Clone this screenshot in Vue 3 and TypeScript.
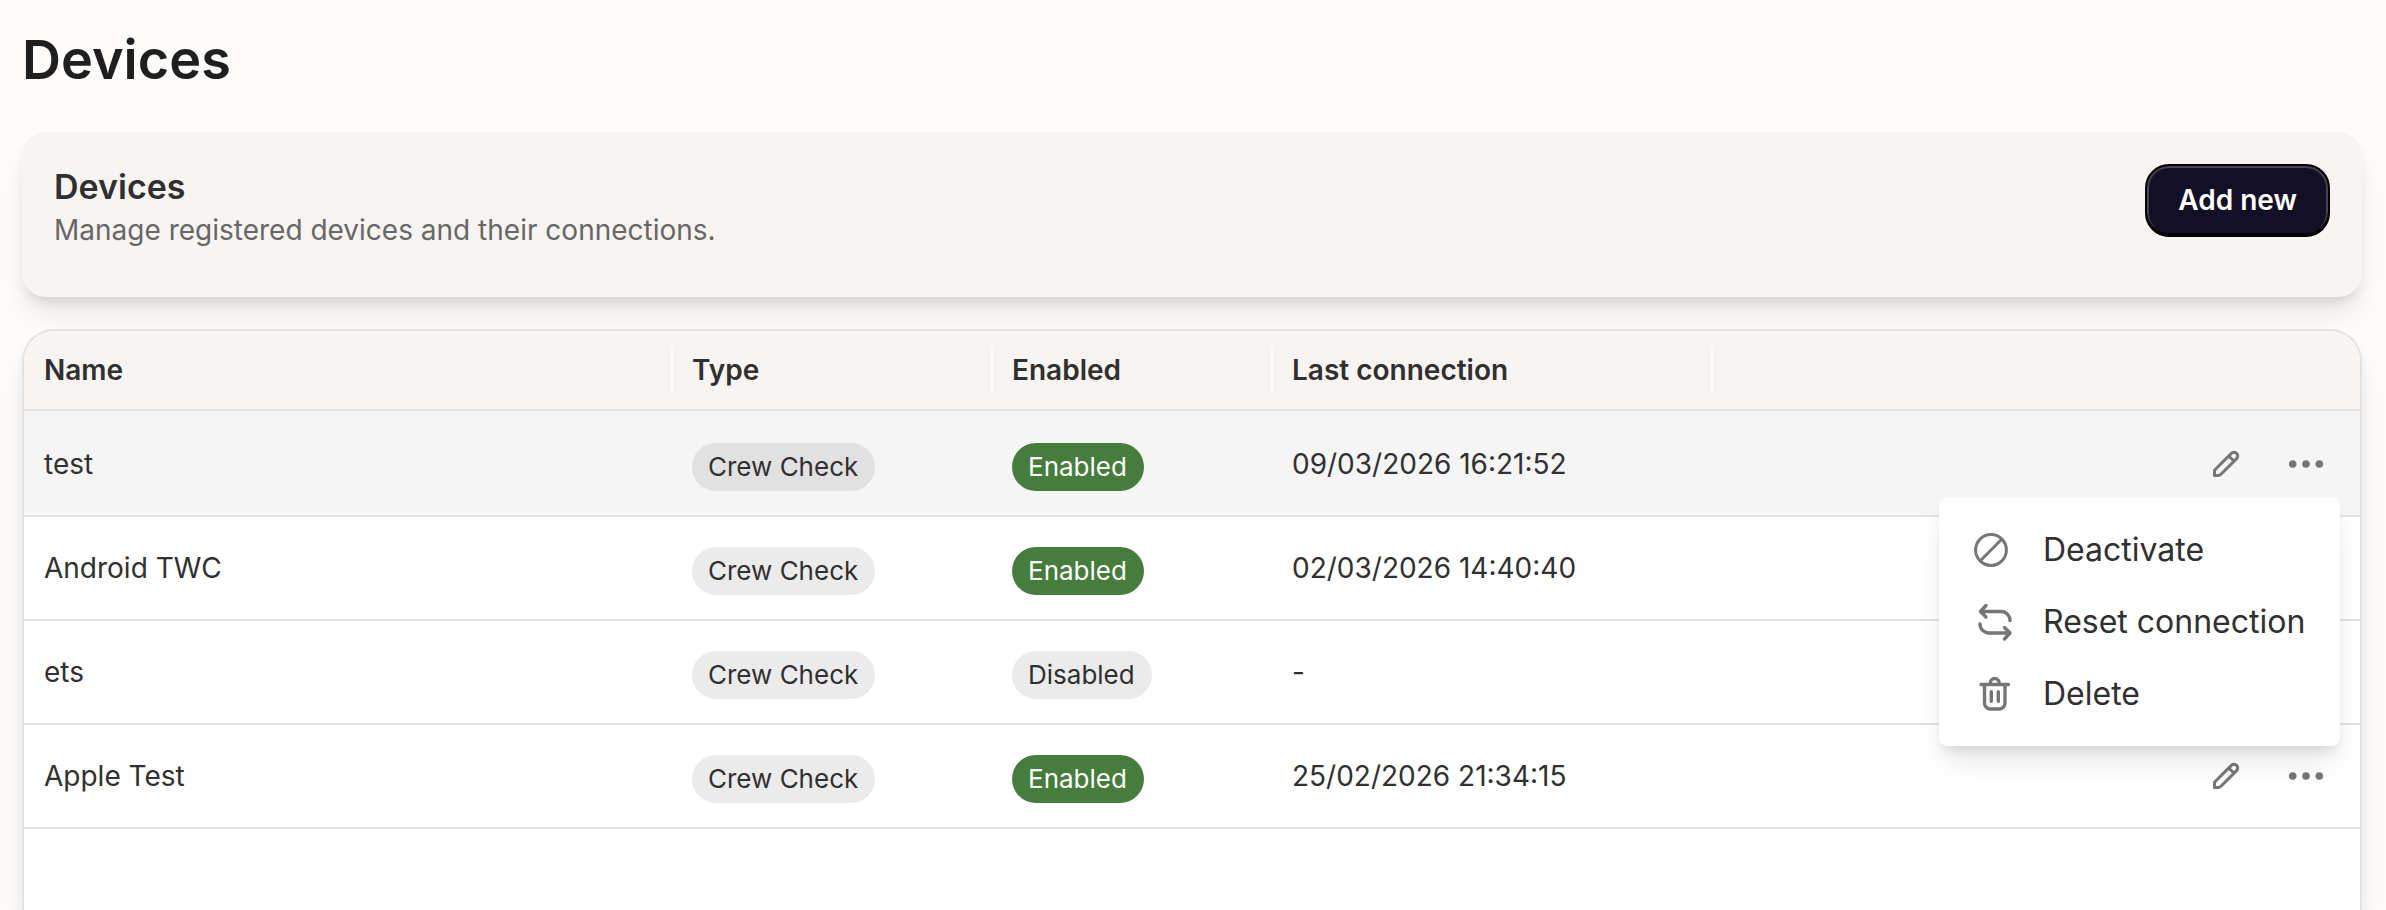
<script setup lang="ts">
import { ref } from 'vue'

interface Device {
  id: number
  name: string
  type: string
  enabled: boolean
  lastConnection: string
}

const devices: Device[] = [
  { id: 1, name: 'test', type: 'Crew Check', enabled: true, lastConnection: '09/03/2026 16:21:52' },
  { id: 2, name: 'Android TWC', type: 'Crew Check', enabled: true, lastConnection: '02/03/2026 14:40:40' },
  { id: 3, name: 'ets', type: 'Crew Check', enabled: false, lastConnection: '-' },
  { id: 4, name: 'Apple Test', type: 'Crew Check', enabled: true, lastConnection: '25/02/2026 21:34:15' },
]

const openMenu = ref<number | null>(1)

function toggleMenu(id: number): void {
  openMenu.value = openMenu.value === id ? null : id
}
</script>

<template>
  <main class="page">
    <h1 class="page-title">Devices</h1>

    <section class="intro">
      <div>
        <h2 class="intro-title">Devices</h2>
        <p class="intro-text">Manage registered devices and their connections.</p>
      </div>
      <button type="button" class="add">Add new</button>
    </section>

    <section class="panel">
      <table class="table">
        <colgroup>
          <col />
          <col class="col-type" />
          <col class="col-enabled" />
          <col class="col-last" />
          <col />
        </colgroup>
        <thead>
          <tr>
            <th scope="col">Name</th>
            <th scope="col">Type</th>
            <th scope="col">Enabled</th>
            <th scope="col">Last connection</th>
            <th scope="col" aria-label="Actions"></th>
          </tr>
        </thead>
        <tbody>
          <tr v-for="device in devices" :key="device.id" :class="{ active: openMenu === device.id }">
            <td>{{ device.name }}</td>
            <td><span class="chip">{{ device.type }}</span></td>
            <td>
              <span class="chip" :class="{ on: device.enabled }">{{ device.enabled ? 'Enabled' : 'Disabled' }}</span>
            </td>
            <td>{{ device.lastConnection }}</td>
            <td>
              <div class="actions">
                <button type="button" class="icon-button" :aria-label="`Edit ${device.name}`">
                  <svg width="28" height="28" viewBox="0 0 28 28" fill="none" stroke="currentColor" stroke-width="3" stroke-linejoin="round">
                    <path d="M2.5 25.5v-5.2L19.4 3.4a3.6 3.6 0 0 1 5.2 5.2L9.2 24c-1 1-2 1.500-3.200 1.500z" />
                    <path d="M16.800 6l5.200 5.200" />
                  </svg>
                </button>
                <button
                  type="button"
                  class="icon-button"
                  aria-haspopup="menu"
                  :aria-expanded="openMenu === device.id"
                  :aria-label="`More actions for ${device.name}`"
                  @click="toggleMenu(device.id)"
                >
                  <svg width="36" height="12" viewBox="0 0 36 12" fill="currentColor">
                    <circle cx="4.700" cy="6" r="3.800" />
                    <circle cx="18" cy="6" r="3.800" />
                    <circle cx="31.300" cy="6" r="3.800" />
                  </svg>
                </button>
                <div v-if="openMenu === device.id" class="menu" role="menu">
                  <button type="button" class="menu-item" role="menuitem">
                    <svg width="40" height="40" viewBox="0 0 40 40" fill="none" stroke="currentColor" stroke-width="3">
                      <circle cx="17" cy="20" r="15.400" />
                      <path d="M6.300 30.700L27.700 9.300" />
                    </svg>
                    Deactivate
                  </button>
                  <button type="button" class="menu-item" role="menuitem">
                    <svg width="40" height="40" viewBox="0 0 40 40" fill="none" stroke="currentColor" stroke-width="3.400" stroke-linecap="round" stroke-linejoin="round">
                      <path d="M12 3.500L6.500 9.500l5.500 5.500M6.500 9.500H27a9 9 0 0 1 9 9" />
                      <path d="M30.500 25.500l5.500 5.500-5.500 6M36 31H15a9 9 0 0 1-9-9" />
                    </svg>
                    Reset connection
                  </button>
                  <button type="button" class="menu-item" role="menuitem">
                    <svg width="40" height="40" viewBox="0 0 40 40" fill="none" stroke="currentColor" stroke-width="3.400" stroke-linecap="round" stroke-linejoin="round">
                      <path d="M7 10.500h27.500M10.500 10.500v18.500a6 6 0 0 0 6 6h8.500a6 6 0 0 0 6-6V10.500M16 10a4.700 5.500 0 0 1 9.400 0" />
                      <path d="M17.300 17.800v9.500M24.300 17.800v9.500" />
                    </svg>
                    Delete
                  </button>
                </div>
              </div>
            </td>
          </tr>
        </tbody>
      </table>
    </section>
  </main>
</template>

<style>
body {
  margin: 0;
  background: #fdfcfa;
}
</style>

<style scoped>
.page {
  --line: #e3e3e3;
  --ink: #303030;
  --tint: #f8f4f1;
  --lift: 0 20px 30px -6px rgba(0, 0, 0, 0.1), 0 8px 12px -4px rgba(0, 0, 0, 0.1);
  box-sizing: border-box;
  height: 100vh;
  overflow: hidden;
  padding: 24px 24px 0 22px;
  display: flex;
  flex-direction: column;
  font-family: Inter, "Liberation Sans", sans-serif;
  font-size: 28px;
  color: var(--ink);
}

h1,
h2,
p {
  margin: 0;
}

.page-title {
  font-size: 54px;
  line-height: 72px;
  font-weight: 600;
  color: #1f1f1f;
  margin-bottom: 36px;
}

.intro {
  flex: none;
  display: flex;
  justify-content: space-between;
  align-items: flex-start;
  padding: 32px 32px 47px;
  border-radius: 24px;
  background: var(--tint);
  box-shadow: var(--lift);
}

.intro-title {
  font-size: 34px;
  line-height: 46px;
  font-weight: 600;
}

.intro-text {
  line-height: 40px;
  color: #676767;
}

.add {
  height: 73px;
  padding: 0 31px 2px;
  border: 2px solid #000;
  border-radius: 24px;
  background: #120f26;
  box-shadow: inset 0 -2px 0 #000, inset 0 0 0 2px rgba(255, 255, 255, 0.22);
  color: #fff;
  font: 600 28px/36px Inter, "Liberation Sans", sans-serif;
}

.panel {
  flex: 1;
  margin-top: 32px;
  border: 2px solid var(--line);
  border-bottom: 0;
  border-radius: 32px 32px 0 0;
  background: #fff;
  box-shadow: var(--lift);
}

.table {
  width: 100%;
  table-layout: fixed;
  border-collapse: separate;
  border-spacing: 0;
}

.col-type {
  width: 320px;
}

.col-enabled {
  width: 280px;
}

.col-last {
  width: 440px;
}

th,
td {
  box-sizing: border-box;
  padding: 0 20px;
  border-bottom: 2px solid var(--line);
  text-align: left;
  vertical-align: middle;
}

th {
  position: relative;
  height: 80px;
  background: var(--tint);
  font-weight: 600;
}

th:first-child {
  border-top-left-radius: 30px;
}

th:last-child {
  border-top-right-radius: 30px;
}

th:not(:last-child)::after {
  content: "";
  position: absolute;
  top: 15px;
  right: -1px;
  z-index: 1;
  width: 2px;
  height: 48px;
  background: #fdfcfc;
}

td {
  height: 104px;
}

tbody tr:first-child td {
  height: 106px;
  padding-top: 2px;
}

.active td {
  background: #f5f5f5;
}

.chip {
  display: inline-block;
  margin-top: 6px;
  padding: 0 17px 0 16px;
  border-radius: 24px;
  background: #ebebeb;
  font-size: 26px;
  line-height: 48px;
  vertical-align: middle;
}

.active .chip {
  background: #e1e1e1;
}

.chip.on,
.active .chip.on {
  background: #467c3c;
  color: #fff;
}

.actions {
  position: relative;
  display: flex;
  justify-content: flex-end;
  gap: 12px;
}

.icon-button {
  display: flex;
  align-items: center;
  justify-content: center;
  width: 68px;
  height: 68px;
  padding: 0;
  border: 0;
  background: transparent;
  color: #767676;
}

.menu {
  position: absolute;
  top: 100%;
  right: 0;
  z-index: 2;
  display: flex;
  flex-direction: column;
  min-width: 401px;
  padding: 16px 0;
  box-sizing: border-box;
  border-radius: 8px;
  background: #fff;
  box-shadow: var(--lift);
}

.menu-item {
  display: flex;
  align-items: center;
  gap: 29px;
  height: 72px;
  padding: 0 32px 0 35px;
  border: 0;
  background: transparent;
  color: var(--ink);
  font: 400 32px/40px Inter, "Liberation Sans", sans-serif;
  white-space: nowrap;
}

.menu-item svg {
  flex: none;
  color: #767676;
}
</style>
